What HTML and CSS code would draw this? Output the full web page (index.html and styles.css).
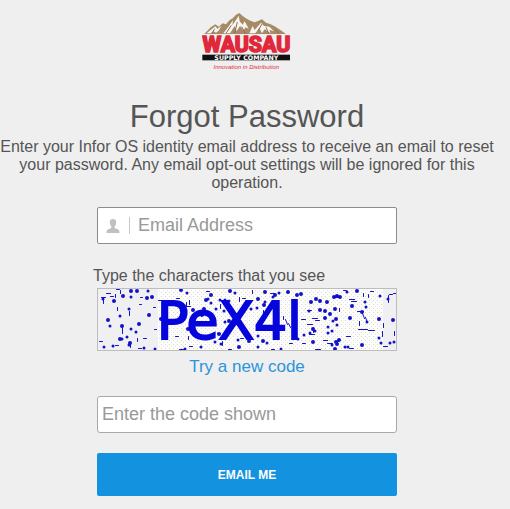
FILE: index.html
```html
<!DOCTYPE html>
<html lang="en">
<head>
    <meta charset="UTF-8">
    <meta name="viewport" content="width=device-width, initial-scale=1.0">
    <title>Forgot Password</title>
    <link rel="stylesheet" href="styles.css">
</head>
<body>

    <header class="logo">
        <svg class="logo-image" viewBox="20 20 270 180" role="img" aria-label="Wausau Supply Company">
            <!-- Mountains -->
            <path fill="#a68b68" d="M27 86 L46 66 L60 57 L70 64 L82 54 L92 57 L103 44 L112 39 L122 28 L132 23 L143 33 L154 40 L165 46 L178 51 L190 46 L200 42 L212 52 L224 56 L238 63 L252 72 L272 86 Z"/>
            <path fill="#f7f5f0" d="M34 84 L60 63 L66 70 L78 62 L70 76 L62 82 L54 77 L46 84 Z M84 84 L98 66 L113 45 L111 60 L124 41 L130 31 L133 48 L142 58 L148 48 L160 70 L150 66 L145 76 L134 62 L124 78 L118 62 L104 84 Z M162 84 L172 62 L178 74 L197 52 L206 62 L222 64 L236 78 L222 73 L226 84 L208 72 L200 84 L192 68 L180 84 Z"/>
            <path fill="none" stroke="#8a6f4e" stroke-width="3" d="M92 84 L108 60 M126 50 L118 84 M139 64 L150 84 M200 56 L188 76 M212 66 L220 84 M58 70 L50 84 M240 72 L250 84"/>
            <text class="logo-name" x="153" y="141" text-anchor="middle">WAUSAU</text>
            <rect x="21" y="148" width="263" height="17" fill="#111"/>
            <text class="logo-company" x="153" y="163" text-anchor="middle">SUPPLY COMPANY</text>
            <text class="logo-slogan" x="153" y="190" text-anchor="middle">Innovation in Distribution</text>
        </svg>
    </header>

    <h1>Forgot Password</h1>
    <p class="intro">Enter your Infor OS identity email address to receive an email to reset your password. Any email opt-out settings will be ignored for this operation.</p>

    <form class="reset-form">
        <div class="email-box">
            <svg class="user-icon" viewBox="0 0 14 14" aria-hidden="true">
                <path fill="#c0c0c0" d="M7 0 C4.600 0 3.600 1.600 3.800 3.800 C4 6 5 7 5.400 7.800 C5.600 9 5 9.300 3.600 9.800 C1.400 10.600 0.500 11 0.500 14 H13.500 C13.500 11 12.600 10.600 10.400 9.800 C9 9.300 8.400 9 8.600 7.800 C9 7 10 6 10.200 3.800 C10.400 1.600 9.400 0 7 0 Z"/>
            </svg>
            <input type="email" id="email" placeholder="Email Address" aria-label="Email Address">
        </div>

        <label class="captcha-label" for="code">Type the characters that you see</label>
        <svg class="captcha" viewBox="0 0 300 63" role="img" aria-label="Code to type">
            <defs>
                <pattern id="dither" width="4" height="4" patternUnits="userSpaceOnUse">
                    <rect width="4" height="4" fill="#fdfdfd"/>
                    <rect x="0" y="0" width="1" height="1" fill="#dcdcb8"/>
                    <rect x="2" y="2" width="1" height="1" fill="#e4e4e0"/>
                </pattern>
            </defs>
            <rect width="300" height="63" fill="#f0f0f3"/>
            <rect x="61" width="225" height="63" fill="url(#dither)"/>

            <!-- Noise -->
            <path class="dots-large" d="M34 3h0M40 3h0M55 9h0M50 10h0M52 27h0M11 32h0M25 38h0M42 36h0M23 51h0M33 55h0M26 8h0M17 13h0M64 31h0
                M84 2h0M133 3h0M109 12h0M107 21h0M105 27h0M142 59h0M132 33h0M114 7h0M91 41h0M96 22h0M122 46h0
                M168 4h0M178 7h0M191 4h0M200 7h0M204 6h0M219 11h0M223 13h0M161 11h0M216 41h0M216 54h0M166 53h0M223 22h0M152 53h0M167 17h0M214 14h0
                M237 9h0M240 8h0M243 9h0M230 14h0M238 21h0M260 3h0M255 18h0M228 30h0M239 31h0M253 30h0M265 24h0M282 31h0M296 32h0M239 54h0M242 52h0M240 56h0M265 57h0M238 61h0M228 23h0M233 26h0"/>
            <path class="dots-small" d="M6 11h0M13 38h0M23 28h0M34 41h0M39 44h0M30 49h0M25 51h0M51 3h0M34 9h0M32 21h0M16 58h0M58 61h0M47 60h0M7 59h0M32 57h0
                M88 61h0M104 59h0M118 54h0M128 12h0M123 12h0M138 5h0M124 56h0M132 13h0M119 21h0M114 15h0M111 11h0M141 52h0M127 23h0M139 28h0M128 34h0M90 5h0
                M154 21h0M160 20h0M212 23h0M161 48h0M207 47h0M213 45h0M170 55h0M184 61h0M201 51h0M168 14h0M161 59h0M182 5h0M176 9h0M218 43h0
                M250 4h0M269 19h0M268 14h0M283 8h0M291 11h0M231 39h0M240 37h0M235 43h0M231 45h0M248 59h0M251 59h0M270 34h0M284 55h0M293 55h0M297 54h0M282 50h0M236 33h0M235 57h0"/>
            <path class="dashes" transform="translate(0.5 0.5)" d="M9 5h4M19 1h3M43 9h2M42 16h2M2 53h3M18 57h3M41 60h3M56 19h2M61 12h3M46 50h3M57 41h2M4 9h4M13 8h3
                M93 30h3M97 33h3M78 48h3M92 58h3M109 3h3M79 10h3M145 10h3M143 50h3M82 61h4M131 61h3M89 18h4M120 45h3
                M173 5h4M215 30h5M218 32h4M210 36h5M204 31h4M174 61h3M218 61h5M205 55h3M192 55h3M210 22h4M212 46h5
                M252 11h5M254 13h5M273 3h3M260 23h6M261 41h6M271 42h6M286 58h4M249 48h4M267 41h3M226 52h4M230 55h5M252 60h4M292 6h3M296 5h3M246 2h3
                M18 6v3M23 2v3M20 19v3M32 23v4M25 39v6M40 50v3M33 54v5M6 10v5M92 12v4M89 14v4M125 53v4M142 9v4M123 16v4M91 48v3
                M186 28v3M188 31l2 5M191 35l2 4M166 22v4M155 2v3M216 39v5M265 25l2 5M268 29l2 5M262 33v4M285 43v5M291 7v7M242 20v3M266 5v3M271 6v3M286 35v4M297 43v4"/>

            <text class="captcha-text" x="60" y="51">PeX4l</text>
            <rect x="0.5" y="0.5" width="299" height="62" fill="none" stroke="#bdbdbd"/>
        </svg>
        <a class="new-code" href="#">Try a new code</a>

        <input class="code-input" type="text" id="code" placeholder="Enter the code shown">
        <button type="submit">EMAIL ME</button>
    </form>

</body>
</html>
```
FILE: styles.css
```css
* {
    box-sizing: border-box;
}

body {
    margin: 0;
    padding: 12px 16px 12px 0;
    background-color: #efefef;
    color: #555;
    font-family: Arial, "Liberation Sans", sans-serif;
    font-size: 16px;
    line-height: 18px;
    text-align: center;
}

/* Logo */
.logo-image {
    display: block;
    width: 90px;
    height: 60px;
    margin: 0 auto;
}

.logo-name {
    font-family: Roboto, "Liberation Sans", sans-serif;
    font-size: 64px;
    font-weight: bold;
    fill: #e0283a;
    stroke: #e0283a;
    stroke-width: 5px;
}

.logo-company {
    font-family: "DejaVu Sans", Verdana, sans-serif;
    font-size: 19px;
    font-weight: bold;
    fill: #fff;
}

.logo-slogan {
    font-size: 18px;
    font-style: italic;
    fill: #e0283a;
}

h1 {
    margin: 27px 0 3px;
    font-size: 31px;
    font-weight: normal;
    line-height: 36px;
}

.intro {
    margin: 0 0 15px;
}

/* Form */
.reset-form {
    display: flex;
    flex-direction: column;
    width: 100%;
    max-width: 300px;
    margin: 0 auto;
}

.email-box {
    display: flex;
    align-items: center;
    height: 37px;
    padding-left: 8px;
    background-color: #fff;
    border: 1px solid #8c8c8c;
    border-radius: 2px;
}

.user-icon {
    width: 14px;
    height: 14px;
}

input {
    font-family: inherit;
    font-size: 18px;
    color: #555;
}

input::placeholder {
    color: #999;
    opacity: 1;
}

.email-box input {
    flex: 1;
    min-width: 0;
    height: 17px;
    margin-left: 9px;
    padding: 0 8px;
    border: none;
    border-left: 1px solid #c8c8c8;
    outline: none;
    background: transparent;
}

.captcha-label {
    margin: 23px 0 3px -4px;
    text-align: left;
}

.captcha {
    display: block;
    width: 100%;
}

.captcha-text {
    font-family: "DejaVu Sans", Verdana, sans-serif;
    font-size: 52px;
    fill: #0505dc;
    stroke: #0505dc;
    stroke-width: 2px;
}

.dots-large,
.dots-small,
.dashes {
    fill: none;
    stroke: #1212c8;
    stroke-linecap: round;
}

.dots-large {
    stroke-width: 4px;
}

.dots-small {
    stroke-width: 3px;
}

.dashes {
    stroke-width: 1px;
}

.new-code {
    align-self: center;
    margin: 6px 0 19px;
    color: #2b93dd;
    font-size: 17px;
    line-height: 20px;
    text-decoration: none;
}

.code-input {
    height: 37px;
    padding: 0 4px;
    border: 1px solid #a8a8a8;
    border-radius: 3px;
}

button {
    height: 43px;
    margin-top: 20px;
    border: none;
    border-radius: 2px;
    background-color: #1392e0;
    color: #fff;
    font-family: inherit;
    font-size: 12px;
    font-weight: bold;
    cursor: pointer;
}

button:hover {
    background-color: #0f7fc4;
}
```
